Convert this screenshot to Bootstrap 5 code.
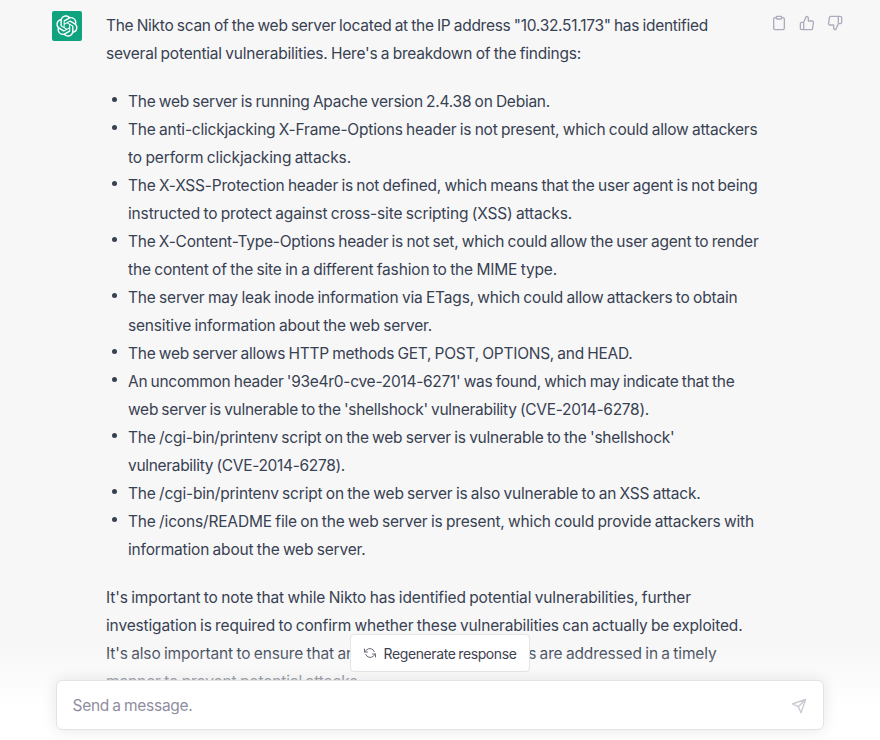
<!DOCTYPE html>
<html lang="en">
<head>
<meta charset="utf-8">
<meta name="viewport" content="width=device-width, initial-scale=1">
<title>Chat</title>
<link href="https://cdn.jsdelivr.net/npm/bootstrap@5.3.0/dist/css/bootstrap.min.css" rel="stylesheet">
<style>
  body { font-family: Inter, "Liberation Sans", sans-serif; font-size: 15.5px; line-height: 28px; color: #374151; background: #f7f7f8; }
  .chat { height: 740px; }
  .message { padding: 12px 37px 0 52px; }
  .avatar { width: 30px; height: 30px; margin-top: -1px; background: #10a37f; border-radius: 2px; color: #fff; }
  .answer { margin-left: 24px; width: 660px; }
  .answer p { margin-bottom: 20px; }
  .ln { display: block; width: max-content; white-space: nowrap; word-spacing: -.8px; }
  .findings { padding-left: 22px; margin-bottom: 20px; }
  .findings li { position: relative; }
  .findings li::before { content: ""; position: absolute; left: -16px; top: 9px; width: 5px; height: 5px; border-radius: 50%; background: #374151; }
  .actions { gap: 12px; color: #acacbe; padding-top: 3px; }
  svg { display: block; fill: none; stroke: currentColor; stroke-width: 2; stroke-linecap: round; stroke-linejoin: round; }
  .avatar svg { fill: currentColor; stroke-width: 1.5; }
  .dock { height: 106px; padding: 0 56px 10px; background: linear-gradient(180deg, rgba(255,255,255,0) 12px, #fff 74px); }
  .regen { width: 180px; height: 38px; margin-bottom: 8px; padding: 2px 0 0; border: 1px solid #e5e5e8; border-radius: 4px; background: #fff; color: #40414f; font-size: 14px; line-height: 20px; --bs-btn-hover-bg: #fff; }
  .regen svg { margin-top: -2px; color: #6b6c7b; }
  .composer { height: 50px; padding: 2px 16px 0 15.5px; border: 1px solid #e3e3e6; border-radius: 6px; background: #fff; box-shadow: 0 0 15px rgba(0,0,0,.1); color: #8e8ea0; }
  .composer svg { color: #c9c9d2; }
</style>
<script src="https://cdn.jsdelivr.net/npm/bootstrap@5.3.0/dist/js/bootstrap.bundle.min.js"></script>
</head>
<body>
<main class="chat position-relative overflow-hidden">
  <article class="message d-flex align-items-start">
    <div class="avatar d-flex align-items-center justify-content-center flex-shrink-0">
      <svg width="22" height="22" viewBox="0 0 41 41"><path stroke="none" d="M37.5324 16.8707C37.9808 15.5241 38.1363 14.0974 37.9886 12.6859C37.8409 11.2744 37.3934 9.91076 36.676 8.68622C35.6126 6.83404 33.9882 5.3676 32.0373 4.4985C30.0864 3.62941 27.9098 3.40259 25.8215 3.85078C24.8796 2.7893 23.7219 1.94125 22.4257 1.36341C21.1295 0.785575 19.7249 0.491269 18.3058 0.500197C16.1708 0.495044 14.0893 1.16803 12.3614 2.42214C10.6335 3.67624 9.34853 5.44666 8.6917 7.47815C7.30085 7.76286 5.98686 8.3414 4.8377 9.17505C3.68854 10.0087 2.73073 11.0782 2.02839 12.312C0.956464 14.1591 0.498905 16.2988 0.721698 18.4228C0.944492 20.5467 1.83612 22.5449 3.268 24.1293C2.81966 25.4759 2.66413 26.9026 2.81182 28.3141C2.95951 29.7256 3.40701 31.0892 4.12437 32.3138C5.18791 34.1659 6.8123 35.6322 8.76321 36.5013C10.7141 37.3704 12.8907 37.5973 14.9789 37.1492C15.9208 38.2107 17.0786 39.0587 18.3747 39.6366C19.6709 40.2144 21.0755 40.5087 22.4946 40.4998C24.6307 40.5054 26.7133 39.8321 28.4418 38.5772C30.1704 37.3223 31.4556 35.5506 32.1119 33.5179C33.5027 33.2332 34.8167 32.6547 35.9659 31.821C37.115 30.9874 38.0728 29.9178 38.7752 28.684C39.8458 26.8371 40.3023 24.6979 40.0789 22.5748C39.8556 20.4517 38.9639 18.4544 37.5324 16.8707ZM22.4978 37.8849C20.7443 37.8874 19.0459 37.2733 17.6994 36.1501C17.7601 36.117 17.8666 36.0586 17.936 36.0161L25.9004 31.4156C26.1003 31.3019 26.2663 31.137 26.3813 30.9378C26.4964 30.7386 26.5563 30.5124 26.5549 30.2825V19.0542L29.9213 20.998C29.9389 21.0068 29.9541 21.0198 29.9656 21.0359C29.977 21.052 29.9842 21.0707 29.9867 21.0902V30.3889C29.9842 32.375 29.1946 34.2791 27.7909 35.6841C26.3872 37.0892 24.4838 37.8806 22.4978 37.8849ZM6.39227 31.0064C5.51397 29.4888 5.19742 27.7107 5.49804 25.9832C5.55718 26.0187 5.66048 26.0818 5.73461 26.1244L13.699 30.7248C13.8975 30.8408 14.1233 30.902 14.3532 30.902C14.583 30.902 14.8088 30.8408 15.0073 30.7248L24.731 25.1103V28.9979C24.7321 29.0177 24.7283 29.0376 24.7199 29.0556C24.7115 29.0736 24.6988 29.0893 24.6829 29.1012L16.6317 33.7497C14.9096 34.7416 12.8643 35.0097 10.9447 34.4954C9.02506 33.9811 7.38785 32.7263 6.39227 31.0064ZM4.29707 13.6194C5.17156 12.0998 6.55279 10.9364 8.19885 10.3327C8.19885 10.4013 8.19491 10.5228 8.19491 10.6071V19.808C8.19351 20.0378 8.25334 20.2638 8.36823 20.4629C8.48312 20.6619 8.64893 20.8267 8.84863 20.9404L18.5723 26.5542L15.206 28.4979C15.1894 28.5089 15.1703 28.5155 15.1505 28.5173C15.1307 28.5191 15.1107 28.516 15.0924 28.5082L7.04046 23.8557C5.32135 22.8601 4.06716 21.2235 3.55289 19.3046C3.03862 17.3858 3.30624 15.3413 4.29707 13.6194ZM31.955 20.0556L22.2312 14.4411L25.5976 12.4981C25.6142 12.4872 25.6333 12.4805 25.6531 12.4787C25.6729 12.4769 25.6928 12.4801 25.7111 12.4879L33.7631 17.1364C34.9967 17.849 36.0017 18.8982 36.6606 20.1613C37.3194 21.4244 37.6047 22.849 37.4832 24.2684C37.3617 25.6878 36.8382 27.0432 35.9743 28.1759C35.1103 29.3086 33.9415 30.1717 32.6047 30.6641C32.6047 30.5947 32.6047 30.4733 32.6047 30.3889V21.188C32.6066 20.9586 32.5474 20.7328 32.4332 20.5338C32.319 20.3348 32.154 20.1698 31.955 20.0556ZM35.3055 15.0128C35.2464 14.9765 35.1431 14.9142 35.069 14.8717L27.1045 10.2712C26.906 10.1554 26.6803 10.0943 26.4504 10.0943C26.2206 10.0943 25.9948 10.1554 25.7963 10.2712L16.0726 15.8858V11.9982C16.0715 11.9783 16.0753 11.9585 16.0837 11.9405C16.0921 11.9225 16.1048 11.9068 16.1207 11.8949L24.1719 7.25025C25.4053 6.53903 26.8158 6.19376 28.2383 6.25482C29.6608 6.31589 31.0364 6.78077 32.2044 7.59508C33.3723 8.40939 34.2842 9.53945 34.8334 10.8531C35.3826 12.1667 35.5464 13.6095 35.3055 15.0128ZM14.2424 21.9419L10.8752 19.9981C10.8576 19.9893 10.8423 19.9763 10.8309 19.9602C10.8195 19.9441 10.8122 19.9254 10.8098 19.9058V10.6071C10.8107 9.18295 11.2173 7.78848 11.9819 6.58696C12.7466 5.38544 13.8377 4.42659 15.1275 3.82264C16.4173 3.21869 17.8524 2.99464 19.2649 3.1767C20.6775 3.35876 22.0089 3.93941 23.1034 4.85067C23.0427 4.88379 22.937 4.94215 22.8668 4.98473L14.9024 9.58517C14.7025 9.69878 14.5366 9.86356 14.4215 10.0626C14.3065 10.2616 14.2466 10.4877 14.2479 10.7175L14.2424 21.9419ZM16.071 17.9991L20.4018 15.4978L24.7325 17.9975V22.9985L20.4018 25.4983L16.071 22.9985V17.9991Z"/></svg>
    </div>
    <div class="answer flex-shrink-0">
      <p><span class="ln" data-w="602">The Nikto scan of the web server located at the IP address "10.32.51.173" has identified</span>
        <span class="ln" data-w="475">several potential vulnerabilities. Here's a breakdown of the findings:</span></p>
      <ul class="findings list-unstyled">
        <li><span class="ln" data-w="422">The web server is running Apache version 2.4.38 on Debian.</span></li>
        <li><span class="ln" data-w="629.5">The anti-clickjacking X-Frame-Options header is not present, which could allow attackers</span>
          <span class="ln" data-w="223">to perform clickjacking attacks.</span></li>
        <li><span class="ln" data-w="629.5">The X-XSS-Protection header is not defined, which means that the user agent is not being</span>
          <span class="ln" data-w="444">instructed to protect against cross-site scripting (XSS) attacks.</span></li>
        <li><span class="ln" data-w="630.5">The X-Content-Type-Options header is not set, which could allow the user agent to render</span>
          <span class="ln" data-w="429">the content of the site in a different fashion to the MIME type.</span></li>
        <li><span class="ln" data-w="609.5">The server may leak inode information via ETags, which could allow attackers to obtain</span>
          <span class="ln" data-w="304">sensitive information about the web server.</span></li>
        <li><span class="ln" data-w="504.5">The web server allows HTTP methods GET, POST, OPTIONS, and HEAD.</span></li>
        <li><span class="ln" data-w="606.5">An uncommon header '93e4r0-cve-2014-6271' was found, which may indicate that the</span>
          <span class="ln" data-w="521">web server is vulnerable to the 'shellshock' vulnerability (CVE-2014-6278).</span></li>
        <li><span class="ln" data-w="546.5">The /cgi-bin/printenv script on the web server is vulnerable to the 'shellshock'</span>
          <span class="ln" data-w="217">vulnerability (CVE-2014-6278).</span></li>
        <li><span class="ln" data-w="572.5">The /cgi-bin/printenv script on the web server is also vulnerable to an XSS attack.</span></li>
        <li><span class="ln" data-w="626">The /icons/README file on the web server is present, which could provide attackers with</span>
          <span class="ln" data-w="237.5">information about the web server.</span></li>
      </ul>
      <p><span class="ln" data-w="585">It's important to note that while Nikto has identified potential vulnerabilities, further</span>
        <span class="ln" data-w="636.5">investigation is required to confirm whether these vulnerabilities can actually be exploited.</span>
        <span class="ln" data-w="610.5">It's also important to ensure that any identified vulnerabilities are addressed in a timely</span>
        <span class="ln" data-w="256">manner to prevent potential attacks.</span></p>
    </div>
    <div class="actions d-flex ms-auto">
      <svg width="16" height="16" viewBox="0 0 24 24"><path d="M16 4h2a2 2 0 0 1 2 2v14a2 2 0 0 1-2 2H6a2 2 0 0 1-2-2V6a2 2 0 0 1 2-2h2"/><rect x="8" y="2" width="8" height="4" rx="1"/></svg>
      <svg width="16" height="16" viewBox="0 0 24 24"><path d="M14 9V5a3 3 0 0 0-3-3l-4 9v11h11.28a2 2 0 0 0 2-1.7l1.38-9a2 2 0 0 0-2-2.3zM7 22H4a2 2 0 0 1-2-2v-7a2 2 0 0 1 2-2h3"/></svg>
      <svg width="16" height="16" viewBox="0 0 24 24"><path d="M10 15v4a3 3 0 0 0 3 3l4-9V2H5.72a2 2 0 0 0-2 1.7l-1.38 9a2 2 0 0 0 2 2.3zm7-13h2.67A2.31 2.31 0 0 1 22 4v7a2.31 2.31 0 0 1-2.33 2H17"/></svg>
    </div>
  </article>

  <footer class="dock position-absolute start-0 end-0 bottom-0">
    <button type="button" class="regen btn d-flex align-items-center justify-content-center mx-auto">
      <svg class="me-2" width="12" height="12" viewBox="0 0 24 24"><path d="M1 4v6h6M23 20v-6h-6"/><path d="M20.49 9A9 9 0 0 0 5.64 5.64L1 10m22 4l-4.64 4.36A9 9 0 0 1 3.51 15"/></svg>
      <span class="ln" data-w="133">Regenerate response</span>
    </button>
    <div class="composer d-flex align-items-center justify-content-between">
      <span class="ln" data-w="120">Send a message.</span>
      <svg width="16" height="16" viewBox="0 0 24 24"><path d="M22 2L11 13M22 2l-7 20-4-9-9-4z"/></svg>
    </div>
  </footer>
</main>
<script>
  // Track each line of text so that it fills its measure.
  document.querySelectorAll('.ln').forEach(function (el) {
    var w = el.getBoundingClientRect().width;
    el.style.letterSpacing = ((el.dataset.w - w) / el.textContent.length) + 'px';
  });
</script>
</body>
</html>
